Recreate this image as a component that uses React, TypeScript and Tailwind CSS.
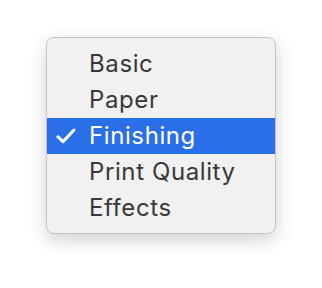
import React from "react";

const ITEMS = ["Basic", "Paper", "Finishing", "Print Quality", "Effects"];

export default function App() {
    const selected = "Finishing";

    return (
        <div className="w-[322px] h-[288px] bg-white pt-[37px] pl-[46px]" style={{ fontFamily: "Inter, 'Liberation Sans', sans-serif" }}>
            <div className="w-[230px] rounded-[8px] border border-[#c4c4c4] bg-[#f1f1f1] pt-[8px] pb-[7px] shadow-[0_6px_18px_rgba(0,0,0,0.18)]">
                {ITEMS.map((item) => {
                    const active = item === selected;
                    return (
                        <div
                            key={item}
                            className={
                                active
                                    ? "flex items-center h-[36px] bg-[#2b6fe8] text-white"
                                    : "flex items-center h-[36px] text-[#383838]"
                            }
                        >
                            <span className="w-[42px] flex justify-start pl-[9px]">
                                {active && (
                                    <svg width="20" height="16" viewBox="0 0 20 16" fill="none">
                                        <path d="M2 8.8 L7 13.6 L18 2" stroke="white" strokeWidth="3" strokeLinecap="round" strokeLinejoin="round" />
                                    </svg>
                                )}
                            </span>
                            <span className="text-[24px] leading-none tracking-[0.6px]">{item}</span>
                        </div>
                    );
                })}
            </div>
        </div>
    );
}
